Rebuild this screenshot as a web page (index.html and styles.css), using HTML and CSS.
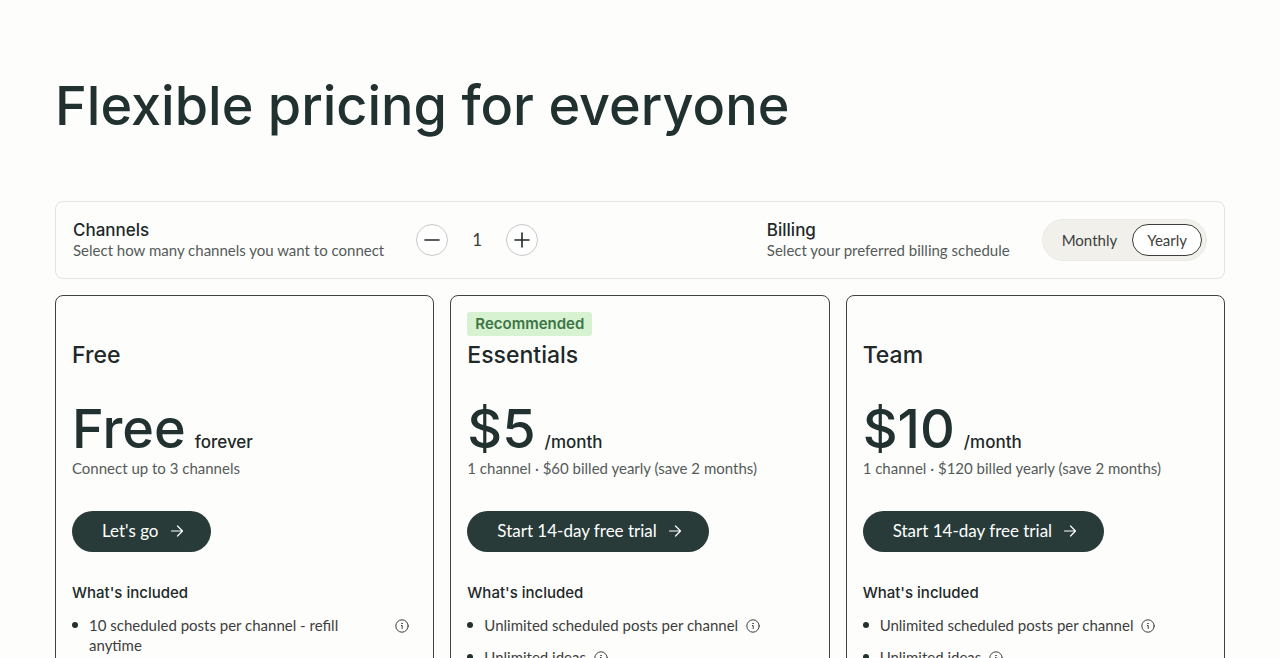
FILE: index.html
```html
<!DOCTYPE html>
<html lang="en">
<head>
    <meta charset="UTF-8">
    <meta name="viewport" content="width=device-width, initial-scale=1.0">
    <title>Pricing</title>
    <link rel="stylesheet" href="styles.css">
</head>
<body>
    <svg class="sprite" aria-hidden="true">
        <symbol id="arrow" viewBox="0 0 14 14">
            <path d="M1.500 7h11M7.500 2 12.500 7l-5 5" />
        </symbol>
        <symbol id="info" viewBox="0 0 14 14">
            <circle cx="7" cy="7" r="6.200" />
            <path d="M6.400 6.500h.800v3" />
            <circle cx="7" cy="4.400" r="0.200" />
        </symbol>
    </svg>
    <main class="page">
        <h1>Flexible pricing for everyone</h1>
        <form class="options">
            <div class="option">
                <div>
                    <label class="option-title" for="channels">Channels</label>
                    <p class="note">Select how many channels you want to connect</p>
                </div>
                <div class="stepper">
                    <button type="button" class="round" aria-label="Remove channel">
                        <svg viewBox="0 0 16 16"><path d="M1 8h14" /></svg>
                    </button>
                    <input id="channels" type="text" inputmode="numeric" value="1">
                    <button type="button" class="round" aria-label="Add channel">
                        <svg viewBox="0 0 16 16"><path d="M1 8h14M8 1v14" /></svg>
                    </button>
                </div>
            </div>
            <div class="option">
                <div>
                    <h2 class="option-title">Billing</h2>
                    <p class="note">Select your preferred billing schedule</p>
                </div>
                <div class="toggle">
                    <input type="radio" name="billing" id="monthly">
                    <label for="monthly">Monthly</label>
                    <input type="radio" name="billing" id="yearly" checked>
                    <label for="yearly">Yearly</label>
                </div>
            </div>
        </form>
        <div class="plans">
            <section class="plan">
                <div class="badge-row"></div>
                <h2 class="plan-name">Free</h2>
                <p class="price"><strong>Free</strong> <span>forever</span></p>
                <p class="note">Connect up to 3 channels</p>
                <a class="cta" href="#">Let's go <svg><use href="#arrow" /></svg></a>
                <h3>What's included</h3>
                <ul>
                    <li><span>10 scheduled posts per channel - refill anytime</span><svg><use href="#info" /></svg></li>
                </ul>
            </section>
            <section class="plan">
                <div class="badge-row"><span class="badge">Recommended</span></div>
                <h2 class="plan-name">Essentials</h2>
                <p class="price"><strong>$5</strong> <span>/month</span></p>
                <p class="note">1 channel · $60 billed yearly (save 2 months)</p>
                <a class="cta" href="#">Start 14-day free trial <svg><use href="#arrow" /></svg></a>
                <h3>What's included</h3>
                <ul>
                    <li><span>Unlimited scheduled posts per channel</span><svg><use href="#info" /></svg></li>
                    <li><span>Unlimited ideas</span><svg><use href="#info" /></svg></li>
                </ul>
            </section>
            <section class="plan">
                <div class="badge-row"></div>
                <h2 class="plan-name">Team</h2>
                <p class="price"><strong>$10</strong> <span>/month</span></p>
                <p class="note">1 channel · $120 billed yearly (save 2 months)</p>
                <a class="cta" href="#">Start 14-day free trial <svg><use href="#arrow" /></svg></a>
                <h3>What's included</h3>
                <ul>
                    <li><span>Unlimited scheduled posts per channel</span><svg><use href="#info" /></svg></li>
                    <li><span>Unlimited ideas</span><svg><use href="#info" /></svg></li>
                </ul>
            </section>
        </div>
    </main>
</body>
</html>
```
FILE: styles.css
```css
* {
    box-sizing: border-box;
}
body {
    margin: 0;
    background: #fdfdfc;
    color: #213130;
    font-family: Lato, "Open Sans", sans-serif;
    font-size: 15px;
    line-height: 20px;
}
h1, h2, h3, p, ul {
    margin: 0;
    padding: 0;
    font-weight: 500;
}
h1, h2, h3, .price, .option-title, .badge {
    font-family: Inter, "Open Sans", sans-serif;
}
svg {
    fill: none;
    stroke: currentColor;
    stroke-linecap: round;
    stroke-linejoin: round;
}
.sprite {
    display: none;
}
.page {
    padding: 73px 55px 0;
}
h1 {
    font-size: 54px;
    line-height: 66px;
    margin-bottom: 62px;
}
.options {
    display: flex;
    justify-content: space-between;
    align-items: center;
    padding: 17px;
    border: 1px solid #e3e3e0;
    border-radius: 8px;
    margin-bottom: 16px;
}
.option {
    display: flex;
    align-items: center;
    gap: 32px;
}
.option-title {
    display: block;
    font-size: 17px;
    font-weight: 500;
    line-height: 20px;
    color: #212828;
}
.note {
    color: #555b59;
    font-weight: 400;
}
.stepper {
    display: flex;
    align-items: center;
}
.round {
    display: flex;
    align-items: center;
    justify-content: center;
    width: 32px;
    height: 32px;
    padding: 0;
    border: 1px solid #c9c9c7;
    border-radius: 50%;
    background: #fff;
    color: #212828;
}
.round svg {
    width: 16px;
    height: 16px;
    stroke-width: 1.600;
}
.stepper input {
    width: 58px;
    padding: 0;
    border: 0;
    background: transparent;
    color: #3d3d3d;
    font: inherit;
    font-size: 17px;
    text-align: center;
}
.toggle {
    display: flex;
    padding: 4px;
    border: 1px solid #ebebe6;
    border-radius: 21px;
    background: #f1f0ea;
}
.toggle input {
    position: absolute;
    opacity: 0;
}
.toggle label {
    padding: 5px 14px;
    border: 1px solid transparent;
    border-radius: 16px;
    color: #3d3d3d;
}
.toggle input:checked + label {
    background: #fff;
    border-color: #3d3d3d;
}
.plans {
    display: grid;
    grid-template-columns: repeat(3, 1fr);
    gap: 16px;
}
.plan {
    padding: 16px 16px 32px;
    border: 1px solid #3d4242;
    border-radius: 8px;
}
.badge-row {
    height: 24px;
}
.badge {
    display: inline-block;
    padding: 2px 8px;
    border-radius: 3px;
    background: #d7f2d1;
    color: #3c7545;
    font-weight: 600;
}
.plan-name {
    margin-top: 4px;
    font-size: 23px;
    line-height: 30px;
    color: #212828;
}
.price {
    display: flex;
    align-items: baseline;
    gap: 9px;
    margin-top: 30px;
}
.price strong {
    font-size: 54px;
    font-weight: 500;
    line-height: 58px;
}
.price span {
    font-size: 17px;
    color: #212828;
}
.cta {
    display: inline-flex;
    align-items: center;
    gap: 11px;
    margin-top: 33px;
    padding: 10px 27px 11px 30px;
    border-radius: 21px;
    background: #283b39;
    color: #fff;
    font-size: 17px;
    text-decoration: none;
}
.cta svg {
    width: 14px;
    height: 14px;
    stroke-width: 1.200;
}
h3 {
    margin-top: 31px;
    font-size: 15px;
    color: #212828;
}
.plan ul {
    margin-top: 12px;
    padding-right: 8px;
    list-style: none;
    color: #3d3d3d;
}
.plan li {
    display: flex;
    align-items: flex-start;
    margin-bottom: 12px;
    font-weight: 400;
}
.plan li::before {
    content: "";
    flex: none;
    width: 6px;
    height: 6px;
    margin: 7px 11px 0 0;
    border-radius: 50%;
    background: #213130;
}
.plan li svg {
    flex: none;
    width: 14px;
    height: 14px;
    margin: 4px 0 0 8px;
}
```
